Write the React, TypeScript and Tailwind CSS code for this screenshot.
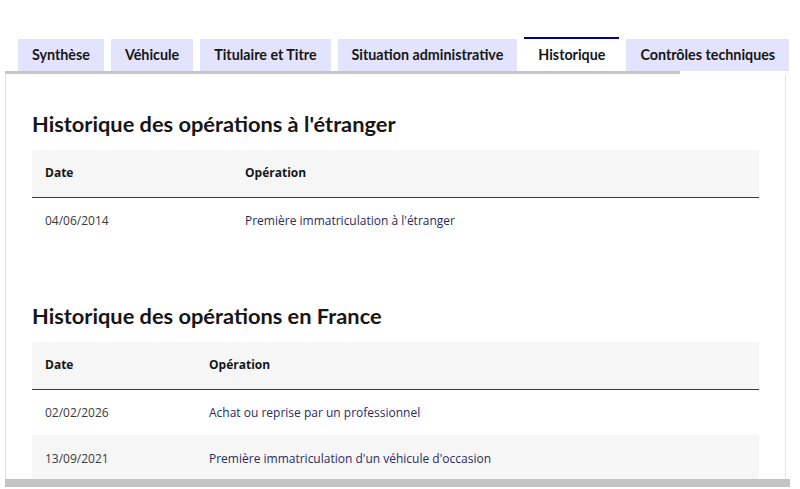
import React from 'react';

const tabs = [
    'Synthèse',
    'Véhicule',
    'Titulaire et Titre',
    'Situation administrative',
    'Historique',
    'Contrôles techniques',
];

interface Row {
    date: string;
    operation: string;
}

const etranger: Row[] = [{ date: '04/06/2014', operation: "Première immatriculation à l'étranger" }];

const france: Row[] = [
    { date: '02/02/2026', operation: 'Achat ou reprise par un professionnel' },
    { date: '13/09/2021', operation: "Première immatriculation d'un véhicule d'occasion" },
];

const HistoryTable = ({ title, rows, dateCol }: { title: string; rows: Row[]; dateCol: string }) => (
    <section>
        <h2 className="font-['Lato',sans-serif] text-[21.8px] leading-[28px] font-bold text-[#161616]">{title}</h2>
        <table className="mt-[12px] w-full border-collapse text-[12px]">
            <thead>
                <tr className="bg-[#f6f6f6] border-b border-[#3a3a3a] h-[47px]">
                    <th className={`${dateCol} pl-[13px] text-left font-bold text-[#161616]`}>Date</th>
                    <th className="pl-[13px] text-left font-bold text-[#161616]">Opération</th>
                </tr>
            </thead>
            <tbody>
                {rows.map((r, i) => (
                    <tr key={i} className={`h-[46px] ${i % 2 === 1 ? 'bg-[#f6f6f6]' : 'bg-white'}`}>
                        <td className="pl-[13px] pt-[2px] text-[#3a3a3a]">{r.date}</td>
                        <td className="pl-[13px] pt-[2px] text-[#2a2a5e]">{r.operation}</td>
                    </tr>
                ))}
            </tbody>
        </table>
    </section>
);

export default function App() {
    return (
        <div className="h-[489px] w-[800px] overflow-hidden bg-white font-['Open_Sans',sans-serif]">
            <div className="pt-[37px] pl-[5px] w-[786px]">
                <div className="flex items-end gap-[7px] pl-[13px] h-[34px] font-['Lato',sans-serif]">
                    {tabs.map(t => {
                        const active = t === 'Historique';
                        return (
                            <div
                                key={t}
                                className={`flex items-center px-[14px] text-[14.3px] font-bold text-[#161616] whitespace-nowrap ${
                                    active
                                        ? 'h-[34px] bg-white border-t-2 border-[#000091]'
                                        : 'h-[32px] bg-[#e3e3fd]'
                                }`}
                            >
                                {t}
                            </div>
                        );
                    })}
                </div>
                {/* tab list scrollbar */}
                <div className="h-[3px] w-[675px] bg-[#c6c6c6]" />
                <div className="h-[405px] overflow-hidden border-x border-[#e5e5e5] px-[26px] pt-[36px]">
                    <HistoryTable title="Historique des opérations à l'étranger" rows={etranger} dateCol="w-[200px]" />
                    <div className="h-[59px]" />
                    <HistoryTable title="Historique des opérations en France" rows={france} dateCol="w-[164px]" />
                </div>
                {/* horizontal scrollbar */}
                <div className="h-[8px] w-[785px] bg-[#c4c4c4]" />
            </div>
        </div>
    );
}
